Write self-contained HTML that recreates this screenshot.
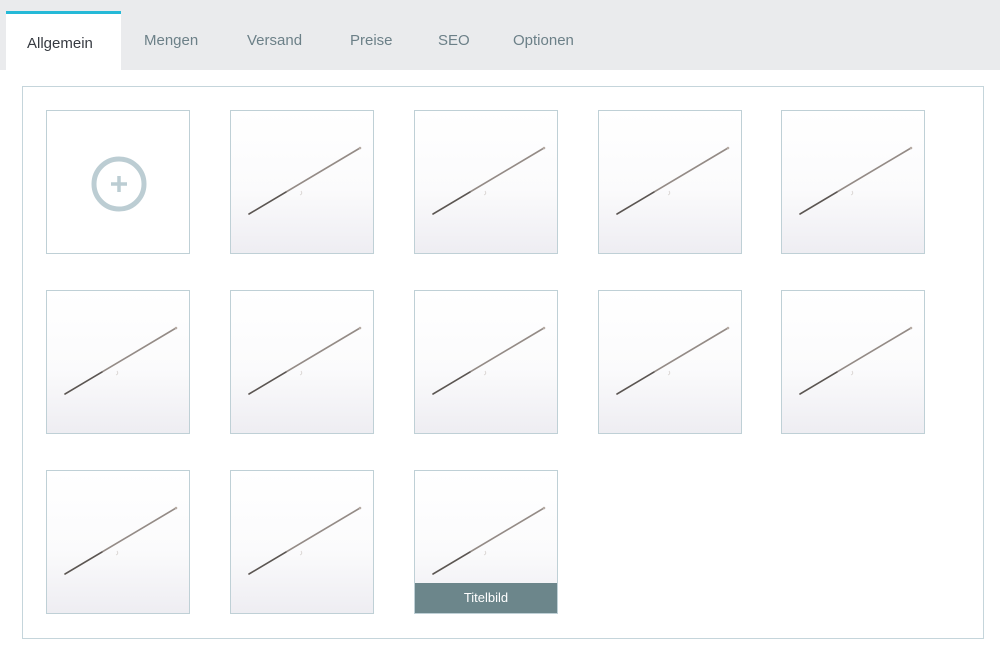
<!DOCTYPE html>
<html><head><meta charset="utf-8"><style>
*{margin:0;padding:0;box-sizing:border-box}
body{width:1000px;height:666px;background:#fff;font-family:"Liberation Sans",sans-serif;position:relative;overflow:hidden}
.bar{position:absolute;left:0;top:0;width:1000px;height:70px;background:#eaebed}
.tab{position:absolute;top:32px;font-size:15px;color:#6c8088}
.act{position:absolute;left:6px;top:11px;width:115px;height:59px;background:#fff;border-top:3px solid #25b9d7}
.act span{position:absolute;left:21px;top:21px;font-size:15px;color:#363a41}
.box{position:absolute;left:22px;top:86px;width:962px;height:553px;border:1px solid #c5d5db}
.t{position:absolute;width:144px;height:144px;border:1px solid #bfd0d6;background:linear-gradient(#fff 0%,#fbfbfc 55%,#eeedf2 100%);overflow:hidden}
.t svg{position:absolute;left:0;top:0}
.lab{position:absolute;left:0;bottom:0;width:100%;height:30px;background:#6c868b;color:#fff;font-size:13px;text-align:center;line-height:30px}
</style></head><body>
<div class="bar"></div>
<div class="act"><span>Allgemein</span></div>
<div class="tab" style="left:144px">Mengen</div>
<div class="tab" style="left:247px">Versand</div>
<div class="tab" style="left:350px">Preise</div>
<div class="tab" style="left:438px">SEO</div>
<div class="tab" style="left:513px">Optionen</div>
<div class="box"></div>
<div class="t" style="left:46px;top:110px;background:#fff"><svg width="144" height="144"><circle cx="72" cy="73" r="25" fill="none" stroke="#bccdd3" stroke-width="5"/><path d="M72 65v16M64 73h16" stroke="#bccdd3" stroke-width="3.5"/></svg></div>
<div id="g"></div>
<script>
var pos=[];
[230,414,598,781].forEach(x=>pos.push([x,110]));
[46,230,414,598,781].forEach(x=>pos.push([x,290]));
[46,230,414].forEach(x=>pos.push([x,470]));
var h='';
pos.forEach((p,i)=>{h+='<div class="t" style="left:'+p[0]+'px;top:'+p[1]+'px"><svg width="144" height="144"><path d="M18 103L129 37" stroke="#948b86" stroke-width="1.6" stroke-linecap="round"/><path d="M18 103L55 81" stroke="#5a5552" stroke-width="1.4" stroke-linecap="round"/><circle cx="129" cy="37" r="1.3" fill="#b7aca5"/><path d="M70 80q2 3 -1 4" stroke="#d6d1ce" fill="none" stroke-width="0.8"/></svg>'+(i==11?'<div class="lab">Titelbild</div>':'')+'</div>'});
document.getElementById('g').innerHTML=h;
</script>
</body></html>
